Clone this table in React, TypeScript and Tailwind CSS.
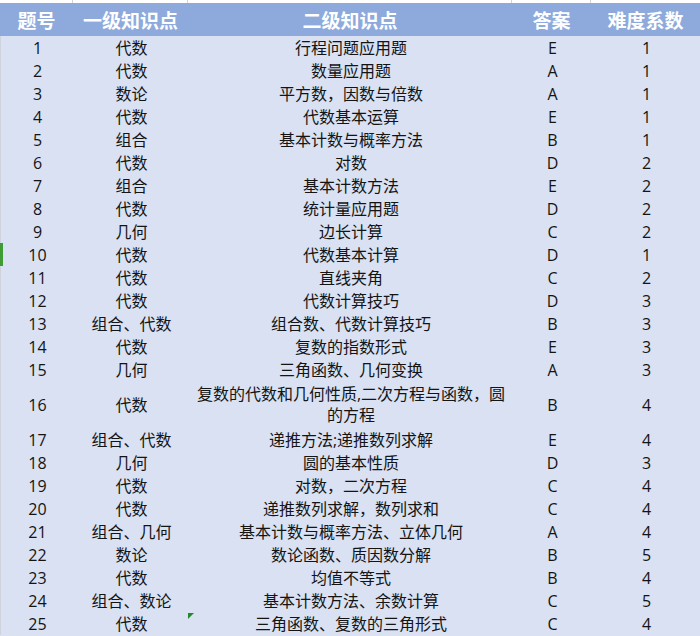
import React from "react";

const rows: [string, string, string, string, string][] = [
  ["1", "代数", "行程问题应用题", "E", "1"],
  ["2", "代数", "数量应用题", "A", "1"],
  ["3", "数论", "平方数，因数与倍数", "A", "1"],
  ["4", "代数", "代数基本运算", "E", "1"],
  ["5", "组合", "基本计数与概率方法", "B", "1"],
  ["6", "代数", "对数", "D", "2"],
  ["7", "组合", "基本计数方法", "E", "2"],
  ["8", "代数", "统计量应用题", "D", "2"],
  ["9", "几何", "边长计算", "C", "2"],
  ["10", "代数", "代数基本计算", "D", "1"],
  ["11", "代数", "直线夹角", "C", "2"],
  ["12", "代数", "代数计算技巧", "D", "3"],
  ["13", "组合、代数", "组合数、代数计算技巧", "B", "3"],
  ["14", "代数", "复数的指数形式", "E", "3"],
  ["15", "几何", "三角函数、几何变换", "A", "3"],
  ["16", "代数", "复数的代数和几何性质,二次方程与函数，圆的方程", "B", "4"],
  ["17", "组合、代数", "递推方法;递推数列求解", "E", "4"],
  ["18", "几何", "圆的基本性质", "D", "3"],
  ["19", "代数", "对数，二次方程", "C", "4"],
  ["20", "代数", "递推数列求解，数列求和", "C", "4"],
  ["21", "组合、几何", "基本计数与概率方法、立体几何", "A", "4"],
  ["22", "数论", "数论函数、质因数分解", "B", "5"],
  ["23", "代数", "均值不等式", "B", "4"],
  ["24", "组合、数论", "基本计数方法、余数计算", "C", "5"],
  ["25", "代数", "三角函数、复数的三角形式", "C", "4"],
];

const cols = "grid grid-cols-[73px_115px_324px_79px_109px]";

export default function App() {
  return (
    <div
      className="w-[700px] h-[636px] overflow-hidden bg-[#d9e1f2] text-[#141414]"
      style={{ fontFamily: '"Open Sans", "Noto Sans CJK SC", "Noto Sans", sans-serif' }}
    >
      {/* top strip */}
      <div className={`${cols} h-[3px] bg-white`}>
        <div className="border-r border-[#d4d4d4]" />
        <div className="border-r border-[#d4d4d4]" />
        <div className="border-r border-[#d4d4d4]" />
        <div className="border-r border-[#d4d4d4]" />
        <div />
      </div>
      {/* header */}
      <div
        className={`${cols} h-[33px] bg-[#8eaadc] text-white font-bold text-[19px] leading-none`}
        style={{ fontFamily: '"Noto Sans CJK SC", sans-serif' }}
      >
        <div className="flex items-center justify-center">题号</div>
        <div className="flex items-center justify-center">一级知识点</div>
        <div className="flex items-center justify-center">二级知识点</div>
        <div className="flex items-center justify-center">答案</div>
        <div className="flex items-center justify-center">难度系数</div>
      </div>
      {/* body */}
      <div className="relative border-l border-[#cfd4dc] text-[16px]">
        {rows.map((r) => {
          const tall = r[0] === "16";
          return (
            <div
              key={r[0]}
              className={`${cols} relative pt-px ${tall ? "h-[47px]" : "h-[23px]"}`}
            >
              {r[0] === "10" && (
                <div className="absolute left-[-1px] top-0 w-[3px] h-[23px] bg-[#3f9b35]" />
              )}
              <div className="flex items-center justify-center leading-none">{r[0]}</div>
              <div className="flex items-center justify-center leading-none">{r[1]}</div>
              <div className="relative flex items-center justify-center text-center leading-[21px] px-1">
                {r[0] === "25" && (
                  <div className="absolute left-[-1px] top-0 w-0 h-0 border-t-[6px] border-t-[#1f8a2e] border-r-[6px] border-r-transparent" />
                )}
                {tall ? (
                  <div className="flex flex-col items-center">
                    <span className="block">复数的代数和几何性质,二次方程与函数，圆</span>
                    <span className="block">的方程</span>
                  </div>
                ) : (
                  r[2]
                )}
              </div>
              <div className="flex items-center justify-center leading-none">{r[3]}</div>
              <div className="flex items-center justify-center leading-none">{r[4]}</div>
            </div>
          );
        })}
      </div>
    </div>
  );
}
